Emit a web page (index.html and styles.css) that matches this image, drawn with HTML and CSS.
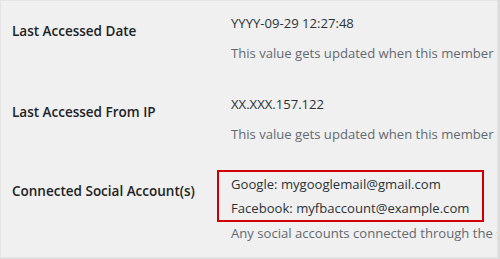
FILE: index.html
```html
<!DOCTYPE html>
<html lang="en">
<head>
  <meta charset="UTF-8">
  <title>Member Profile</title>
  <link rel="stylesheet" href="styles.css">
</head>
<body>
  <div class="panel">
    <div class="form-row">
      <div class="field-label">Last Accessed Date</div>
      <div class="field-value">
        <div class="value">YYYY-09-29 12:27:48</div>
        <div class="description">This value gets updated when this member logs into your site.</div>
      </div>
    </div>

    <div class="form-row">
      <div class="field-label">Last Accessed From IP</div>
      <div class="field-value">
        <div class="value">XX.XXX.157.122</div>
        <div class="description">This value gets updated when this member logs into your site.</div>
      </div>
    </div>

    <div class="form-row social-row">
      <div class="field-label social-label">Connected Social Account(s)</div>
      <div class="field-value">
        <div class="highlight-box">
          <div class="value">Google: mygooglemail@gmail.com</div>
          <div class="value">Facebook: myfbaccount@example.com</div>
        </div>
        <div class="description tight">Any social accounts connected through the social login addon.</div>
      </div>
    </div>
  </div>
</body>
</html>
```

FILE: styles.css
```css
body {
  margin: 0;
  background-color: #dcdcdc;
  font-family: 'Open Sans', 'Noto Sans', sans-serif;
}

.panel {
  width: 496px;
  height: 256px;
  background-color: #f0f0f0;
  border: 1px solid #e4e4e4;
  overflow: hidden;
}

.form-row {
  display: flex;
  padding: 11px 0 18px;
}

.social-row {
  padding-top: 7px;
}

.field-label {
  width: 230px;
  flex-shrink: 0;
  padding-left: 11px;
  padding-top: 8px;
  font-size: 13.5px;
  font-weight: 600;
  color: #1d2327;
  box-sizing: border-box;
  line-height: 22px;
  white-space: nowrap;
}

.social-label {
  padding-top: 10px;
}

.field-value {
  white-space: nowrap;
  font-size: 13.1px;
  color: #2c3338;
}

.value {
  line-height: 22px;
}

.description {
  margin-top: 8px;
  line-height: 22px;
  color: #646970;
}

.description.tight {
  margin-top: 0;
}

.highlight-box {
  display: inline-block;
  margin-left: -14px;
  padding: 1px 13px 1px 12px;
  border: 2px solid #cc0000;
}

.highlight-box .value + .value {
  margin-top: 2px;
}
```
